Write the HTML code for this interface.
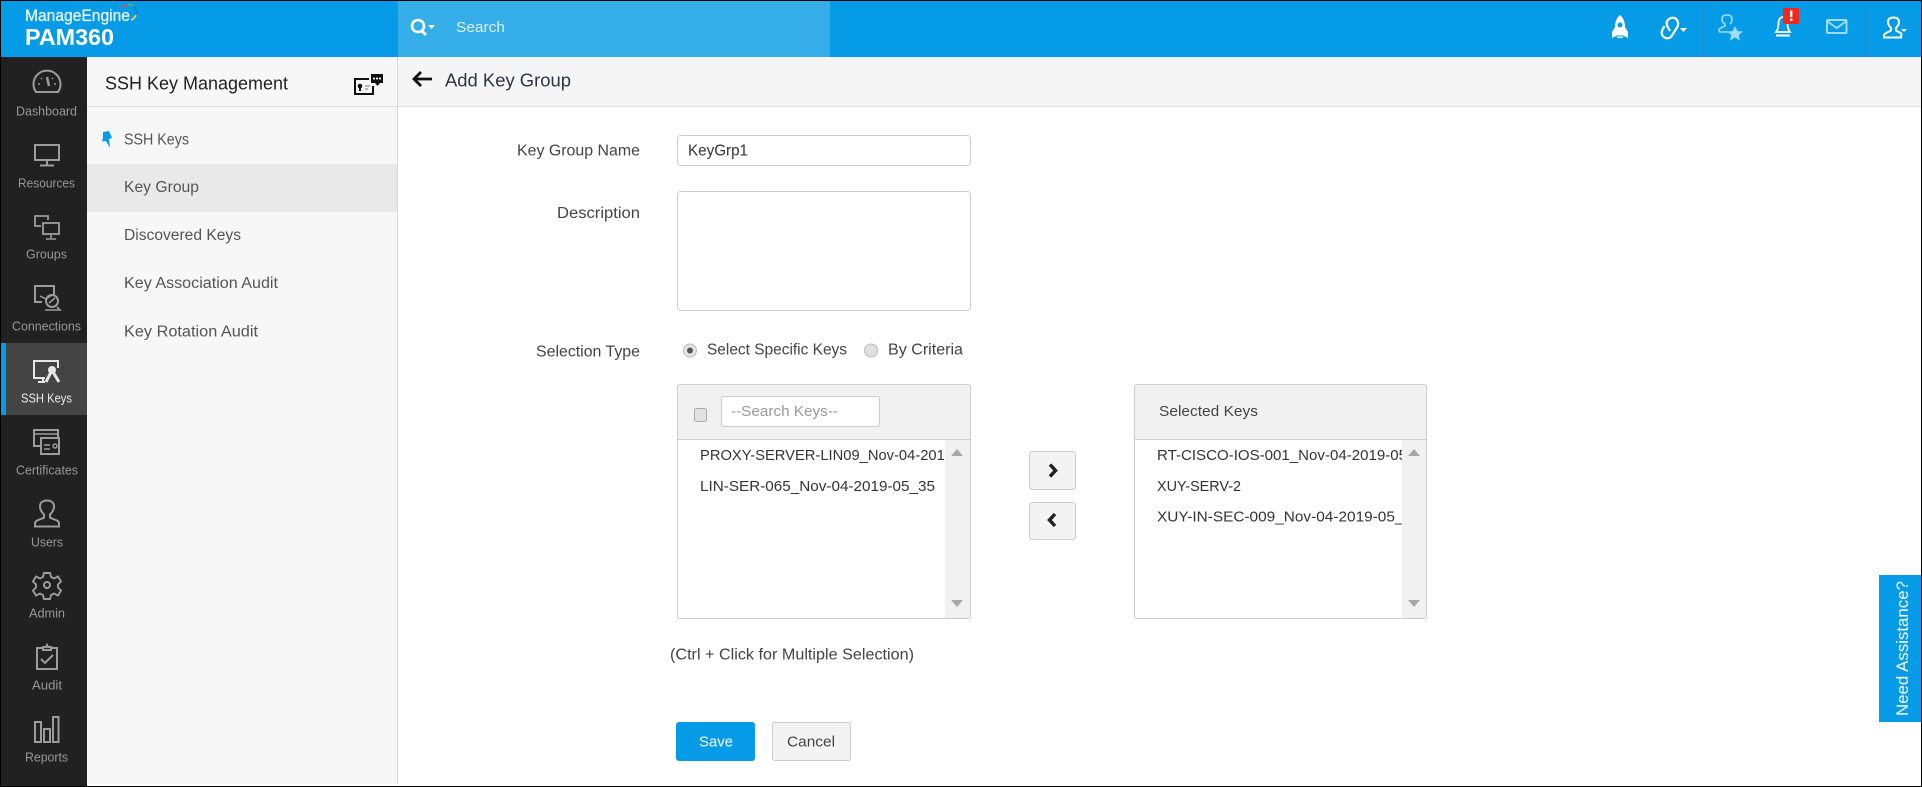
<!DOCTYPE html>
<html><head><meta charset="utf-8"><title>PAM360 - Add Key Group</title>
<style>
html,body{margin:0;padding:0;width:1922px;height:787px;overflow:hidden;background:#fff}
svg{display:block}
text{font-family:"Liberation Sans",sans-serif}
.nav{font-size:12.5px;fill:#979797;text-anchor:start}
.sub{font-size:15.5px;fill:#555}
.lbl{font-size:15.5px;fill:#444}
.itm{font-size:15px;fill:#333}
.ic{fill:none;stroke:#9c9c9c}
.tw{fill:none;stroke:#fff}
.tl{fill:none;stroke:#9fdcf7}
</style></head><body>
<svg width="1922" height="787" viewBox="0 0 1922 787" xmlns="http://www.w3.org/2000/svg" stroke-width="2">
<defs>
<clipPath id="c1"><rect x="690" y="440" width="255" height="178"/></clipPath>
<clipPath id="c2"><rect x="1140" y="440" width="262" height="178"/></clipPath>
</defs>
<rect width="1922" height="787" fill="#fff"/>
<!-- header -->
<rect x="0" y="0" width="1922" height="57" fill="#069be6"/>
<rect x="398" y="0" width="432" height="57" fill="#35ade9"/>
<rect x="0" y="0" width="1922" height="1" fill="#000"/>
<text x="25" y="21" font-size="16.5" fill="#e6f5fd" textLength="105" lengthAdjust="spacingAndGlyphs" stroke="#e6f5fd" stroke-width=".3">ManageEngine</text>
<path d="M122 8a9.500 9.500 0 0 1 6-3.500" fill="none" stroke="#e04a4a" stroke-width="1.500"/>
<path d="M128 4.500a9.500 9.500 0 0 1 6 1.500" fill="none" stroke="#3fb58a" stroke-width="1.800"/>
<path d="M134 6a9.500 9.500 0 0 1 2 9" fill="none" stroke="#1d7fc4" stroke-width="1.800"/>
<path d="M136 15a9.500 9.500 0 0 1-5 5" fill="none" stroke="#e8d44a" stroke-width="1.800"/>
<text x="25" y="45" font-size="23.5" font-weight="700" fill="#fff" textLength="89" lengthAdjust="spacingAndGlyphs">PAM360</text>
<!-- search -->
<circle cx="418" cy="26" r="6" fill="none" stroke="#fff" stroke-width="2.600"/>
<path d="M422 31l4 4" stroke="#fff" stroke-width="3"/>
<path d="M428 25h7l-3.500 4z" fill="#fff"/>
<text x="456" y="32" font-size="15" fill="#dff2fc" textLength="49" lengthAdjust="spacingAndGlyphs">Search</text>
<!-- top right icons -->
<path d="M1620 15c3.500 3 5 7 5 12l3 5v6l-4-2-1.500 2h-5l-1.500-2-4 2v-6l3-5c0-5 1.500-9 5-12z" fill="#fff"/>
<circle cx="1620" cy="25" r="2.500" fill="#069be6"/>
<path d="M1616 36h8" stroke="#069be6" stroke-width="1"/>
<path d="M1670 31l-2-3.500c-2-3.500-1.500-6.500 1-8.500 3-2 6.500-1.500 8 1 1.500 2.500 1.500 5 0 7.500l-5 8c-2 3-5 3.500-7.500 2-3-2-3.500-5-2-8l2-3.500" class="tw" stroke-width="2.200"/>
<path d="M1680 28h7l-3.500 4z" fill="#fff"/>
<rect x="1702" y="8" width="1" height="49" fill="#1a8fd0"/>
<path d="M1728 32h-8c-1 0-1-1-1-2 0-2 4-3 6-4v-2c-2-1-3-3-3-5 0-3 2-4 5-4s5 1 5 4c0 2-1 4-2 5" class="tl" stroke-width="1.600"/>
<path d="M1735 26l2.400 5 5.600.5-4.200 3.500 1.300 5.500-5.100-3-5.100 3 1.300-5.500-4.200-3.500 5.600-.5z" fill="#9fdcf7"/>
<path d="M1776 32c1.500-2 2.500-4 2.500-9 0-4 2.500-6 4.500-6s4.500 2 4.500 6c0 5 1 7 2.500 9z" class="tw" stroke-width="1.800"/>
<path d="M1776 35.500h14" stroke="#fff" stroke-width="2"/>
<rect x="1783" y="8" width="16" height="16" fill="#f4271c" rx="1"/>
<rect x="1790" y="10.500" width="2.400" height="6.500" fill="#fff"/><rect x="1790" y="18.500" width="2.400" height="2.400" fill="#fff"/>
<rect x="1827" y="20" width="19.500" height="13" class="tl" rx="1"/>
<path d="M1827 21l9.750 7 9.750-7" class="tl"/>
<rect x="1866" y="8" width="1" height="49" fill="#1a8fd0"/>
<path d="M1884 37.500v-2c0-2.500 5-3.500 7-5v-2.500c-2-2-3-4-3-6 0-3 2-4.500 5.500-4.500s5.500 1.500 5.500 4.500c0 2-1 4-3 6v2.500c2 1.500 4 1.500 5.500 3.500l-.5 3.500z" class="tw"/>
<path d="M1901 29h6l-3 3z" fill="#fff"/>
<!-- left nav -->
<rect x="0" y="57" width="87" height="730" fill="#212121"/>
<rect x="0" y="0" width="1" height="787" fill="#000"/>
<rect x="1" y="343" width="86" height="72" fill="#444"/>
<rect x="1" y="343" width="5" height="72" fill="#069be6"/>
<!-- dashboard -->
<path d="M36 92a13.500 13.500 0 1 1 22 0z" class="ic"/>
<path d="M47 77l2 9" stroke="#9c9c9c" stroke-width="2.500"/>
<path d="M38 84h2M54 84h2M41 78l1 1M53 78l-1 1" stroke="#9c9c9c" stroke-width="1.500"/>
<text class="nav" x="16" y="115.500" textLength="61" lengthAdjust="spacingAndGlyphs">Dashboard</text>
<!-- resources -->
<rect x="35" y="145" width="24" height="15" class="ic"/>
<path d="M47 160v5M40 165.500h14" class="ic"/>
<text class="nav" x="18" y="187.500" textLength="57" lengthAdjust="spacingAndGlyphs">Resources</text>
<!-- groups -->
<path d="M48 220v-4H35v10h6" class="ic" stroke-width="1.800"/>
<rect x="43" y="223" width="16" height="11" class="ic" stroke-width="1.800"/>
<path d="M51 234v4M46 239h10" class="ic" stroke-width="1.600"/>
<text class="nav" x="26" y="258.500" textLength="41" lengthAdjust="spacingAndGlyphs">Groups</text>
<!-- connections -->
<path d="M42 302h-7v-16h19v9" class="ic"/>
<path d="M40 296l6 3 6-4" class="ic" stroke-width="1.500"/>
<circle cx="52" cy="301" r="6" class="ic"/>
<path d="M45 310h15l-3-3" class="ic" stroke-width="1.600"/>
<path d="M49 303l6-5" class="ic" stroke-width="1.500"/>
<text class="nav" x="12" y="330.500" textLength="69" lengthAdjust="spacingAndGlyphs">Connections</text>
<!-- ssh keys -->
<path d="M45 378h-11v-17h24v7" fill="none" stroke="#e6e6e6" stroke-width="2"/>
<path d="M38 382h7M43 378v4" stroke="#e6e6e6" stroke-width="2"/>
<circle cx="52" cy="370" r="4" fill="#e6e6e6"/>
<path d="M51 372l-5 10M53 372l6 10" stroke="#e6e6e6" stroke-width="3"/>
<text x="21" y="402.500" font-size="12.500" fill="#eaeaea" textLength="51" lengthAdjust="spacingAndGlyphs">SSH Keys</text>
<!-- certificates -->
<path d="M41 446h-7v-16h24v7" class="ic"/>
<path d="M34 434h24" class="ic" stroke-width="1.500"/>
<rect x="41" y="438" width="18" height="16" class="ic"/>
<path d="M44 445h6M44 449h6" class="ic" stroke-width="1.500"/>
<circle cx="55" cy="446" r="2" class="ic" stroke-width="1.500"/>
<text class="nav" x="16" y="474.500" textLength="62" lengthAdjust="spacingAndGlyphs">Certificates</text>
<!-- users -->
<path d="M35 526.500v-3c0-4 7-4 9-6v-3c-2-2-4-5-4-8 0-4 3-6 7-6s7 2 7 6c0 3-2 6-4 8v3c2 2 9 2 9 6v3z" class="ic"/>
<text class="nav" x="31" y="546.500" textLength="32" lengthAdjust="spacingAndGlyphs">Users</text>
<!-- admin -->
<circle cx="47" cy="585" r="3" class="ic"/>
<path d="M44 573h6l1 4 3 1.500 4-2 3 5-3 3v3l3 3-3 5-4-2-3 1.500-1 4h-6l-1-4-3-1.500-4 2-3-5 3-3v-3l-3-3 3-5 4 2 3-1.500z" class="ic" stroke-width="1.900"/>
<text class="nav" x="29" y="617.500" textLength="36" lengthAdjust="spacingAndGlyphs">Admin</text>
<!-- audit -->
<path d="M43 648h-6v21h20v-21h-6M43 650v-3h3l1-2 1 2h3v3z" class="ic"/>
<path d="M41 659l4 4 8-8" class="ic"/>
<text class="nav" x="32" y="689.500" textLength="30" lengthAdjust="spacingAndGlyphs">Audit</text>
<!-- reports -->
<rect x="35" y="722" width="6" height="20" class="ic"/>
<rect x="44" y="729" width="6" height="13" class="ic"/>
<rect x="53" y="717" width="5.500" height="25" class="ic"/>
<text class="nav" x="25" y="761.500" textLength="43" lengthAdjust="spacingAndGlyphs">Reports</text>
<!-- submenu -->
<rect x="87" y="57" width="310" height="727" fill="#f7f7f7"/>
<rect x="397" y="57" width="1" height="727" fill="#d8d8d8"/>
<rect x="87" y="106" width="310" height="1" fill="#ddd"/>
<rect x="87" y="164" width="310" height="48" fill="#e9e9e9"/>
<text x="105" y="89.500" font-size="18" fill="#222" textLength="183" lengthAdjust="spacingAndGlyphs">SSH Key Management</text>
<!-- submenu header icon -->
<path d="M369 79h-14v15h18v-8" fill="none" stroke="#111" stroke-width="2"/>
<circle cx="360" cy="86" r="2.300" fill="#111"/><path d="M360 86v5" stroke="#111" stroke-width="2"/>
<path d="M365 86h5M365 89h3" stroke="#777" stroke-width="1"/>
<path d="M371 74h12v9h-3l-2.500 3-2.500-3h-4z" fill="#111"/>
<path d="M373 78.500h8" stroke="#fff" stroke-width="1.800" stroke-dasharray="2 1"/>
<!-- pin -->
<path d="M103 132l6-1 3 7-3 1 1 9-4-7-4 .5 1-4z" fill="#069be6"/>
<text class="sub" x="124" y="144.500" textLength="65" lengthAdjust="spacingAndGlyphs">SSH Keys</text>
<text class="sub" x="124" y="192" textLength="75" lengthAdjust="spacingAndGlyphs">Key Group</text>
<text class="sub" x="124" y="240" textLength="117" lengthAdjust="spacingAndGlyphs">Discovered Keys</text>
<text class="sub" x="124" y="288" textLength="154" lengthAdjust="spacingAndGlyphs">Key Association Audit</text>
<text class="sub" x="124" y="336.500" textLength="134" lengthAdjust="spacingAndGlyphs">Key Rotation Audit</text>
<!-- content header -->
<rect x="398" y="57" width="1523" height="49" fill="#f5f5f5"/>
<rect x="398" y="106" width="1523" height="1" fill="#ddd"/>
<path d="M432 79h-18M421 72l-7 7 7 7" fill="none" stroke="#111" stroke-width="2.800"/>
<text x="445" y="86.500" font-size="18" fill="#2d3545" textLength="126" lengthAdjust="spacingAndGlyphs">Add Key Group</text>
<!-- form -->
<text class="lbl" x="517" y="155.500" textLength="123" lengthAdjust="spacingAndGlyphs">Key Group Name</text>
<rect x="677.500" y="135.500" width="293" height="30" rx="3" fill="#fff" stroke="#ccc" stroke-width="1"/>
<text x="688" y="155.500" font-size="15.500" fill="#333" textLength="60" lengthAdjust="spacingAndGlyphs">KeyGrp1</text>
<text class="lbl" x="557" y="218" textLength="83" lengthAdjust="spacingAndGlyphs">Description</text>
<rect x="677.500" y="191.500" width="293" height="119" rx="3" fill="#fff" stroke="#ccc" stroke-width="1"/>
<text class="lbl" x="536" y="356.500" textLength="104" lengthAdjust="spacingAndGlyphs">Selection Type</text>
<circle cx="690" cy="350.500" r="6.500" fill="#e4e4e4" stroke="#bbb" stroke-width="1"/>
<circle cx="690" cy="350.500" r="3" fill="#555"/>
<text class="lbl" x="707" y="354.500" textLength="140" lengthAdjust="spacingAndGlyphs">Select Specific Keys</text>
<circle cx="871" cy="350.500" r="6.500" fill="#e0e0e0" stroke="#bbb" stroke-width="1"/>
<text class="lbl" x="888" y="354.500" textLength="75" lengthAdjust="spacingAndGlyphs">By Criteria</text>
<!-- left list -->
<rect x="677.500" y="384.500" width="293" height="234" rx="2" fill="#fff" stroke="#ccc" stroke-width="1"/>
<path d="M678 439v-52a2 2 0 0 1 2-2h288a2 2 0 0 1 2 2v52z" fill="#f1f1f1"/>
<rect x="677" y="439" width="294" height="1" fill="#ccc"/>
<rect x="945" y="440" width="25" height="178" fill="#f1f1f1"/>
<path d="M951 456h12l-6-7z" fill="#a8a8a8"/><path d="M951 600h12l-6 7z" fill="#a8a8a8"/>
<rect x="694.500" y="408.500" width="12" height="13" rx="2" fill="#e2e2e2" stroke="#aaa" stroke-width="1"/>
<rect x="721.500" y="396.500" width="158" height="30" rx="2" fill="#fff" stroke="#ccc" stroke-width="1"/>
<text x="731" y="416" font-size="15" fill="#999" textLength="107" lengthAdjust="spacingAndGlyphs">--Search Keys--</text>
<g clip-path="url(#c1)">
<text class="itm" x="700" y="460" textLength="253" lengthAdjust="spacingAndGlyphs">PROXY-SERVER-LIN09_Nov-04-2019</text>
<text class="itm" x="700" y="491" textLength="235" lengthAdjust="spacingAndGlyphs">LIN-SER-065_Nov-04-2019-05_35</text>
</g>
<!-- move buttons -->
<rect x="1029.500" y="451.500" width="46" height="38" rx="3" fill="#f3f3f3" stroke="#ccc" stroke-width="1"/>
<path d="M1050 464.500l5.500 6-5.500 6" fill="none" stroke="#222" stroke-width="3.500"/>
<rect x="1029.500" y="502.500" width="46" height="37" rx="3" fill="#f3f3f3" stroke="#ccc" stroke-width="1"/>
<path d="M1055 514l-5.500 6 5.500 6" fill="none" stroke="#222" stroke-width="3.500"/>
<!-- right list -->
<rect x="1134.500" y="384.500" width="292" height="234" rx="2" fill="#fff" stroke="#ccc" stroke-width="1"/>
<path d="M1135 439v-52a2 2 0 0 1 2-2h287a2 2 0 0 1 2 2v52z" fill="#f1f1f1"/>
<rect x="1134" y="439" width="293" height="1" fill="#ccc"/>
<rect x="1402" y="440" width="24" height="178" fill="#f1f1f1"/>
<path d="M1408 456h12l-6-7z" fill="#a8a8a8"/><path d="M1408 600h12l-6 7z" fill="#a8a8a8"/>
<text x="1159" y="416" font-size="15" fill="#444" textLength="99" lengthAdjust="spacingAndGlyphs">Selected Keys</text>
<g clip-path="url(#c2)">
<text class="itm" x="1157" y="460" textLength="250" lengthAdjust="spacingAndGlyphs">RT-CISCO-IOS-001_Nov-04-2019-05</text>
<text class="itm" x="1157" y="491" textLength="84" lengthAdjust="spacingAndGlyphs">XUY-SERV-2</text>
<text class="itm" x="1157" y="521.500" textLength="255" lengthAdjust="spacingAndGlyphs">XUY-IN-SEC-009_Nov-04-2019-05_3</text>
</g>
<text class="lbl" x="670" y="659.500" textLength="244" lengthAdjust="spacingAndGlyphs">(Ctrl + Click for Multiple Selection)</text>
<!-- buttons -->
<rect x="676" y="722" width="79" height="39" rx="3" fill="#069be6"/>
<text x="699" y="746.500" font-size="15" fill="#fff" textLength="34" lengthAdjust="spacingAndGlyphs">Save</text>
<rect x="772.500" y="722.500" width="78" height="38" rx="2" fill="#f3f3f3" stroke="#ccc" stroke-width="1"/>
<text x="787" y="746.500" font-size="15" fill="#444" textLength="48" lengthAdjust="spacingAndGlyphs">Cancel</text>
<!-- need assistance -->
<rect x="1879" y="575" width="42" height="147" fill="#069be6"/>
<text transform="translate(1908 716) rotate(-90)" font-size="17" fill="#fff" textLength="135" lengthAdjust="spacingAndGlyphs">Need Assistance?</text>
<!-- frame -->
<rect x="1921" y="0" width="1" height="787" fill="#000"/>
<rect x="0" y="786" width="1922" height="1" fill="#000"/>
</svg>
</body></html>
